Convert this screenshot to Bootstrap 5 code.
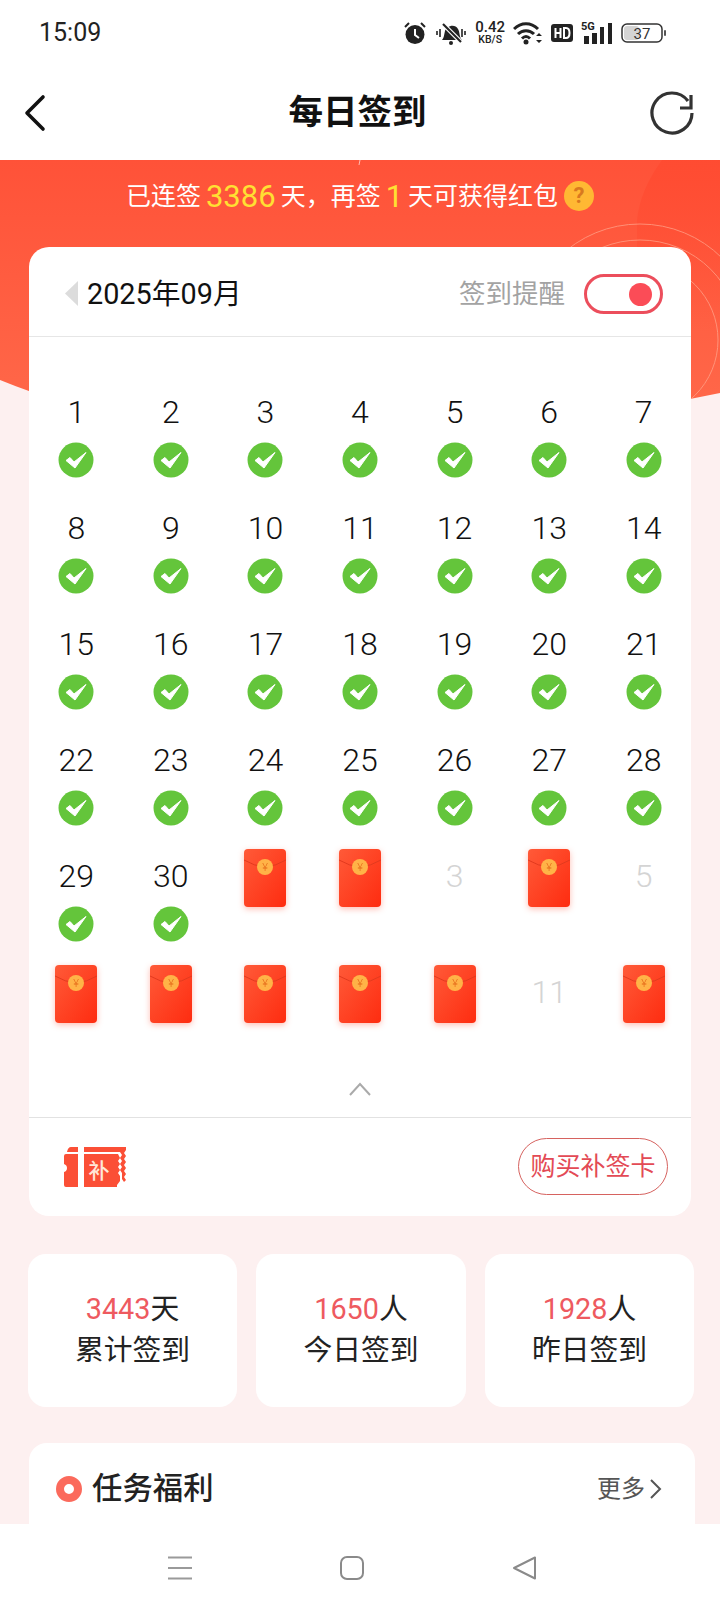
<!DOCTYPE html>
<html lang="zh">
<head>
<meta charset="utf-8">
<title>每日签到</title>
<link href="https://cdn.jsdelivr.net/npm/bootstrap@5.3.0/dist/css/bootstrap.min.css" rel="stylesheet">
<style>
html,body{margin:0;height:1612px;overflow:hidden;background:#fdf0f0}
body{font-family:Roboto,"Noto Sans CJK SC",sans-serif;color:#222;position:relative}
.phone{height:1612px;overflow:hidden;position:relative}
.topwrap{background:#fff}
.sbar{height:65px;padding:0 53px 0 39px}
.sclock{font-size:25px;line-height:1}
.speed{font-size:15px;line-height:14px;text-align:center;color:#222;font-weight:500}
.speed span{display:block;font-size:10.5px;line-height:12px}
.apphead{height:95px;padding:0 25px 0 20px;display:grid;grid-template-columns:1fr auto 1fr;align-items:center}
.apphead svg:last-child{justify-self:end}
.apptitle{font-size:34.5px;font-weight:700;color:#111;line-height:1}
.herobg{position:absolute;left:0;top:160px;width:720px;height:260px;z-index:0}
.content{position:relative;z-index:1}
.streak{height:87px;color:#fff;font-size:25px;line-height:1;padding-bottom:15px}
.streak b{font-weight:400;color:#ffe033;font-size:31px;margin:0 5px}
.qmark{width:30px;height:30px;border-radius:50%;background:#ffb833;color:#d9791f;font-size:22px;font-weight:700;margin-left:6px}
.calcard{margin:0 29px;background:#fff;border-radius:20px;height:969px}
.calhead{height:90px;border-bottom:1px solid #e6e6e6;padding:5px 28px 0 36px}
.monthtxt{font-size:28.8px;color:#111;margin-left:9px;line-height:1}
.remind{font-size:26.5px;color:#a3a3a3;line-height:1;margin-right:19px}
.switchbox{width:79px;height:40px;border:3px solid #ec4e5c;border-radius:20px;padding-right:8px}
.switchdot{width:23px;height:23px;background:#fb4c57;border-radius:50%}
.caldays{display:grid;grid-template-columns:repeat(7,1fr);padding-top:52px;grid-auto-rows:116px}
.dayc{display:flex;flex-direction:column;align-items:center;font-size:32px;font-weight:300;line-height:46px;color:#111}
.dayc svg.chk{margin-top:7px}
.dayc.fut{color:#d4d4d4}
.packet{width:42px;height:58px;display:block;margin-top:-4px;filter:drop-shadow(0 2px 3px rgba(255,70,40,.35))}
.arrowrow{height:56px;margin-top:-24px}
.calfoot{height:98px;border-top:1px solid #e2e2e2;padding:0 23px 0 35px}
.buybtn{width:150px;height:57px;border:1px solid #d6625f;border-radius:29px;color:#e34a55;font-size:25px;line-height:1;background:#fff}
.statsrow{display:grid;grid-template-columns:209px 210px 209px;gap:19px;padding:38px 27px 0 28px}
.statbox{background:#fff;border-radius:18px;height:153px;text-align:center;font-size:28.8px;line-height:41px;padding-top:35px;color:#222}
.statbox em{font-style:normal;color:#ee5a5f}
.taskcard{margin:36px 25px 0 29px;background:#fff;border-radius:18px 18px 0 0;height:120px;padding:0 33px 0 27px}
.taskhead{height:92px}
.tasktitle{font-size:30.4px;font-weight:500;color:#222;line-height:1;margin-left:10px}
.ringmark{width:26px;height:26px;border:8px solid #fb6a5c;border-radius:50%}
.moretxt{font-size:24px;color:#555;line-height:1}
.bnav{position:absolute;left:0;right:0;bottom:0;height:88px;background:#fff;z-index:2;padding-right:16px}
.bnav svg{display:block}
.navgrp{width:368px}
</style>
</head>
<body>
<div class="phone">
  <svg class="herobg" viewBox="0 0 720 260" aria-hidden="true">
    <defs>
      <linearGradient id="hg" x1="0" y1="0" x2="0" y2="1"><stop offset="0" stop-color="#ff5238"/><stop offset="1" stop-color="#ff6a4b"/></linearGradient>
      <linearGradient id="hd" x1="0" y1="0" x2="0" y2="1"><stop offset="0" stop-color="#ff4a30" stop-opacity=".8"/><stop offset="1" stop-color="#ff4a30" stop-opacity="0"/></linearGradient>
      <clipPath id="hc"><path d="M0 0H720V233Q263 328 0 220Z"/></clipPath>
    </defs>
    <path d="M0 0H720V233Q263 328 0 220Z" fill="url(#hg)"/>
    <path d="M662 0Q640 30 637 60V170H720V0Z" fill="url(#hd)"/>
    <g fill="none" stroke="#ffa890" stroke-width="1" opacity=".7" clip-path="url(#hc)">
      <circle cx="640" cy="180" r="116"/>
      <circle cx="640" cy="180" r="100"/>
      <circle cx="640" cy="180" r="78"/>
    </g>
    <path d="M360 0L359 5" stroke="#fff" stroke-width="1" opacity=".6"/>
  </svg>
  <div class="content">
    <div class="topwrap">
      <div class="sbar d-flex align-items-center justify-content-between">
        <div class="sclock">15:09</div>
        <div class="d-flex align-items-center gap-2">
          <svg width="24" height="24" viewBox="0 0 24 24"><circle cx="12" cy="13.500" r="9.500" fill="#222"/><path d="M12 8v6l4 3" stroke="#fff" stroke-width="2" fill="none"/><path d="M2 6l4-4M22 6l-4-4" stroke="#222" stroke-width="2"/></svg>
          <svg width="32" height="24" viewBox="0 0 32 24"><path d="M7 19c2-2 2-5 3-9 1-5 10-8 13-2 2 3 1 8 4 11z" fill="#222"/><circle cx="16" cy="22" r="2" fill="#222"/><path d="M8 3l18 18" stroke="#fff" stroke-width="4.500"/><path d="M8 3l18 18" stroke="#222" stroke-width="2.200"/><path d="M2 10v4M5 8v8M27 8v8M30 10v4" stroke="#222" stroke-width="1.600"/></svg>
          <div class="speed">0.42<span>KB/S</span></div>
          <svg width="30" height="24" viewBox="0 0 30 24"><path d="M1 8c7-7 17-7 24 0M5 13c4.500-4.500 11.500-4.500 16 0M9 17.500c2.500-2.500 5.500-2.500 8 0" stroke="#222" stroke-width="3" fill="none"/><circle cx="13" cy="21" r="2.500" fill="#222"/><path d="M23 15l3-3 3 3zM23 19l3 3 3-3z" fill="#222"/></svg>
          <svg width="22" height="18" viewBox="0 0 22 18"><rect width="22" height="18" rx="3" fill="#222"/><path d="M4.500 4v10M9.500 4v10M4.500 9h5" stroke="#fff" stroke-width="2"/><path d="M13 4h2c2.500 0 3.500 2 3.500 5s-1 5-3.500 5h-2z" stroke="#fff" stroke-width="2" fill="none"/></svg>
          <svg width="32" height="24" viewBox="0 0 32 24"><text x="0" y="9" font-family="Roboto" font-weight="700" font-size="11" fill="#222">5G</text><rect x="3" y="15" width="5" height="8" fill="#222"/><rect x="11" y="12" width="5" height="11" fill="#222"/><rect x="19" y="6" width="4" height="17" fill="#222"/><rect x="27" y="2" width="4" height="21" fill="#222"/></svg>
          <svg width="46" height="22" viewBox="0 0 46 22"><rect x="1" y="2" width="40" height="18" rx="5" fill="#fff" stroke="#333" stroke-width="1.500"/><rect x="3" y="4" width="15" height="14" rx="3" fill="#d4d4d4"/><text x="21" y="16.500" text-anchor="middle" font-family="Roboto" font-size="15" fill="#333">37</text><rect x="43" y="8" width="2" height="6" rx="1" fill="#555"/></svg>
        </div>
      </div>
      <div class="apphead">
        <svg width="28" height="40" viewBox="0 0 28 40"><path d="M23 4L7 20l16 16" fill="none" stroke="#111" stroke-width="3.600" stroke-linecap="round" stroke-linejoin="round"/></svg>
        <div class="apptitle">每日签到</div>
        <svg width="46" height="46" viewBox="0 0 46 46"><path d="M39 11A20 20 0 1 0 43 23" fill="none" stroke="#333" stroke-width="3.200"/><path d="M42 5V18H31" fill="none" stroke="#333" stroke-width="3.200"/></svg>
      </div>
    </div>
    <div class="streak d-flex align-items-center justify-content-center">已连签<b>3386</b>天，再签<b>1</b>天可获得红包<span class="qmark d-inline-flex align-items-center justify-content-center">?</span></div>
    <div class="calcard">
      <div class="calhead d-flex align-items-center justify-content-between">
        <div class="d-flex align-items-center">
          <svg width="13" height="25" viewBox="0 0 13 25"><path d="M13 0V25L0 12.500Z" fill="#dcdcdc"/></svg>
          <span class="monthtxt">2025年09月</span>
        </div>
        <div class="d-flex align-items-center">
          <span class="remind">签到提醒</span>
          <div class="switchbox d-flex align-items-center justify-content-end"><span class="switchdot"></span></div>
        </div>
      </div>
      <div class="caldays" id="days"></div>
      <div class="arrowrow d-flex align-items-center justify-content-center">
        <svg width="24" height="14" viewBox="0 0 24 14"><path d="M2 13L12 2l10 11" fill="none" stroke="#aaa" stroke-width="2"/></svg>
      </div>
      <div class="calfoot d-flex align-items-center justify-content-between">
        <svg width="62" height="40" viewBox="0 0 62 40">
          <path d="M7 0H14V5H3Q4 0 7 0ZM20 0H62V3L60 6L62 9L60 12L62 15L60 18L62 21L60 24L62 27L60 30L62 33L60 35L58 32V26L56 23L58 20L56 17L58 14L56 11L58 8L56 5H20Z" fill="#fb4f36"/>
          <path d="M2 7H14V40H2Q0 40 0 38V25Q3 24 3 21Q3 18 0 17V9Q0 7 2 7ZM20 7H54L56 11L54 14L56 17L54 20L56 23L54 26L56 29V34L53 38V40H20Z" fill="#fb4f36"/>
          <text x="35" y="31" text-anchor="middle" font-family="Noto Sans CJK SC" font-size="21" font-weight="500" fill="#ffe8d8">补</text>
        </svg>
        <button type="button" class="buybtn btn p-0">购买补签卡</button>
      </div>
    </div>
    <div class="statsrow">
      <div class="statbox"><em>3443</em>天<br>累计签到</div>
      <div class="statbox"><em>1650</em>人<br>今日签到</div>
      <div class="statbox"><em>1928</em>人<br>昨日签到</div>
    </div>
    <div class="taskcard">
      <div class="taskhead d-flex align-items-center justify-content-between">
        <div class="d-flex align-items-center"><span class="ringmark"></span><span class="tasktitle">任务福利</span></div>
        <div class="d-flex align-items-center gap-1"><span class="moretxt">更多</span><svg width="13" height="22" viewBox="0 0 13 22"><path d="M2 2l9 9-9 9" fill="none" stroke="#555" stroke-width="2"/></svg></div>
      </div>
    </div>
  </div>
  <div class="bnav d-flex align-items-center justify-content-center">
    <div class="navgrp d-flex justify-content-between">
      <svg width="24" height="24" viewBox="0 0 24 24"><path d="M0 1.500H24M0 12H24M0 22.500H24" stroke="#9a9a9a" stroke-width="2"/></svg>
      <svg width="24" height="24" viewBox="0 0 24 24"><rect x="1" y="1" width="22" height="22" rx="6" fill="none" stroke="#8a8a8a" stroke-width="2"/></svg>
      <svg width="24" height="24" viewBox="0 0 24 24"><path d="M23 1.500V22.500L2 12Z" fill="none" stroke="#8a8a8a" stroke-width="2" stroke-linejoin="round"/></svg>
    </div>
  </div>
</div>
<script>
(function(){
  var check='<svg class="chk" width="36" height="36" viewBox="0 0 36 36"><circle cx="18" cy="18" r="17.500" fill="#64c53b"/><path d="M8 18.500l4-3 4 4.500L28 10.500l-11 15.500z" fill="#fff" stroke="#fff" stroke-width="1" stroke-linejoin="round"/></svg>';
  var pk='<svg class="packet" viewBox="0 0 42 58"><defs><linearGradient id="pg" x1="0" y1="0" x2="1" y2="1"><stop offset="0" stop-color="#ff5a38"/><stop offset="1" stop-color="#fe2c10"/></linearGradient></defs><rect width="42" height="58" rx="4" fill="url(#pg)"/><path d="M0 11Q21 24 42 11" fill="none" stroke="#e23a1f" stroke-width="1"/><circle cx="21" cy="18" r="8" fill="#ffb347"/><text x="21" y="22" text-anchor="middle" font-size="11" font-family="Roboto" fill="#e56a1a">¥</text></svg>';
  var html='';
  for(var d=1;d<=30;d++){html+='<div class="dayc">'+d+check+'</div>';}
  ['p','p',3,'p',5,'p','p','p','p','p',11,'p'].forEach(function(r){
    html+= r==='p' ? '<div class="dayc">'+pk+'</div>' : '<div class="dayc fut">'+r+'</div>';
  });
  document.getElementById('days').innerHTML=html;
})();
</script>
</body>
</html>
